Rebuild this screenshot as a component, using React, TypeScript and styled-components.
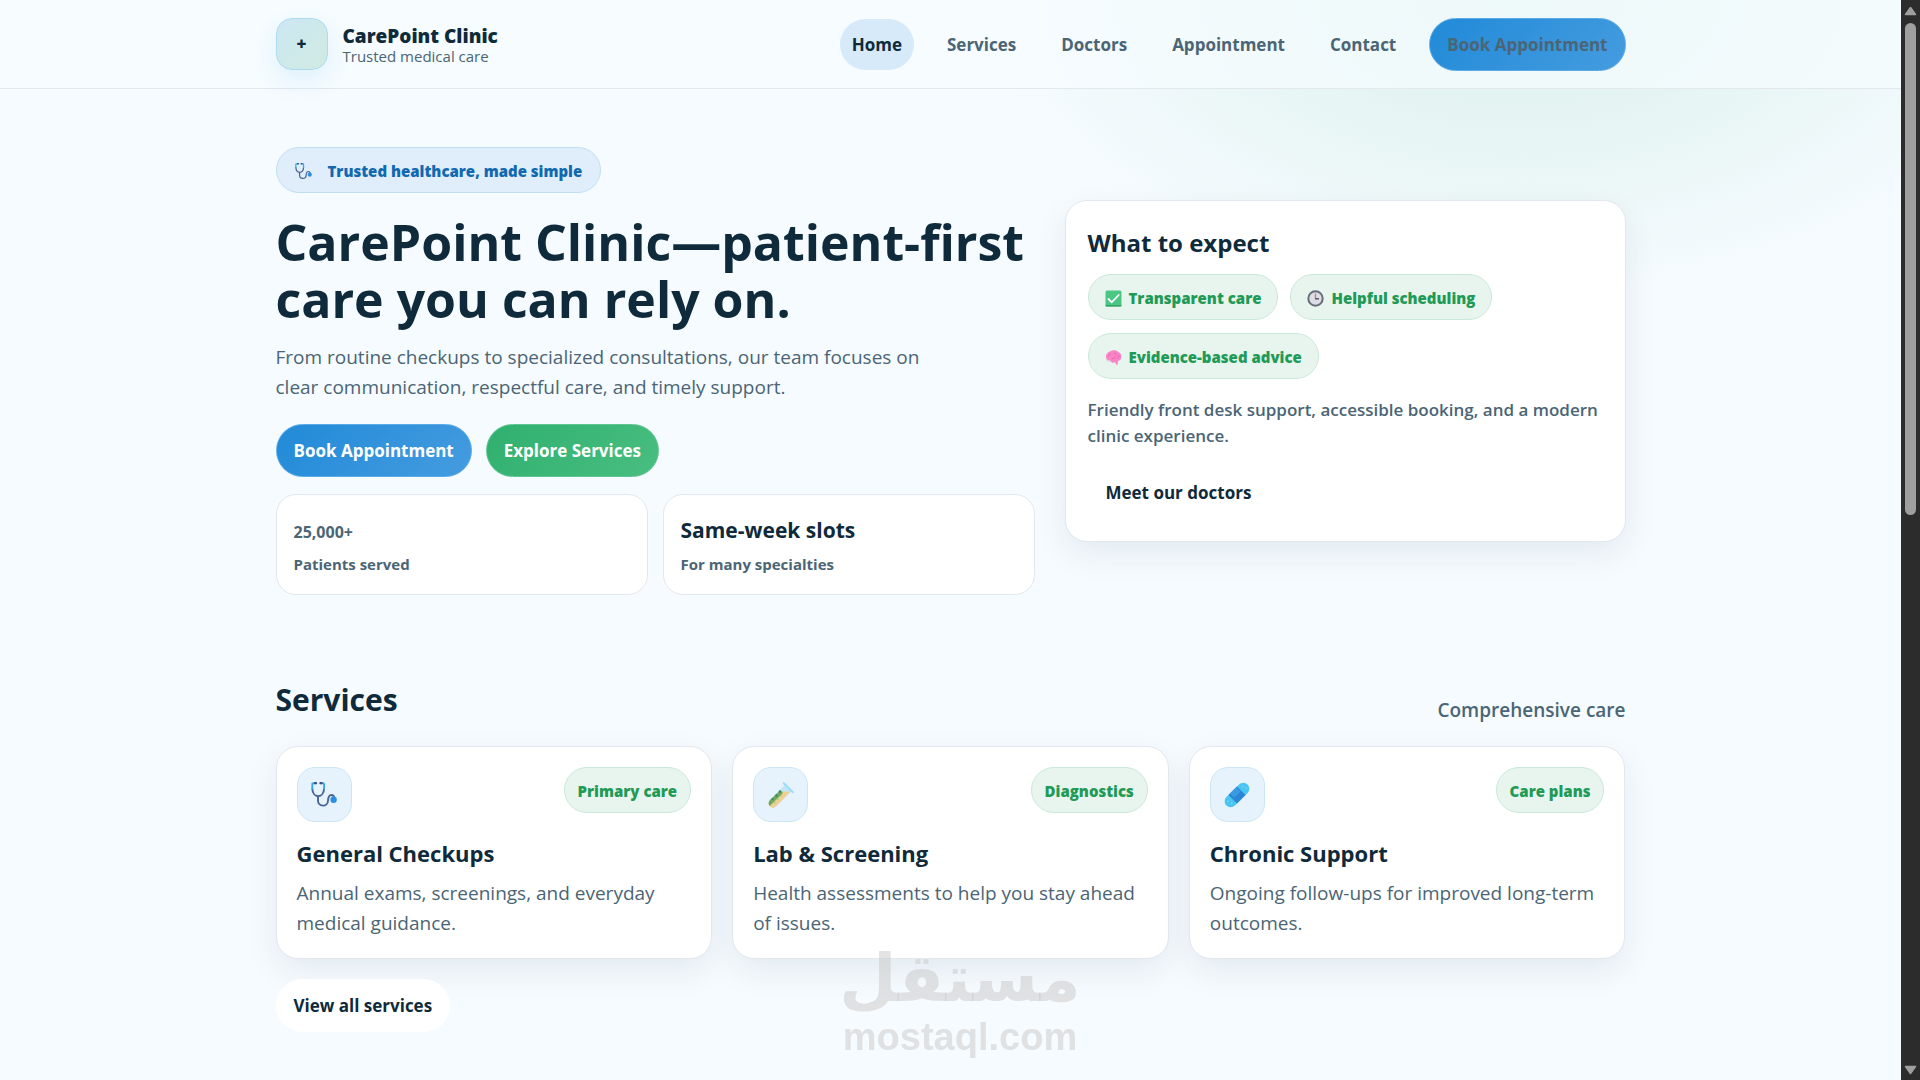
import React from "react";
import styled, { createGlobalStyle, css } from "styled-components";

const ink = "#0f2a3a";
const muted = "#4b6575";
const line = "#e2e8ee";

const GlobalStyle = createGlobalStyle`
  *, *::before, *::after { box-sizing: border-box; }
  body {
    margin: 0;
    background: #f6fbff;
    color: ${ink};
    font-family: "Open Sans", "Noto Sans", sans-serif;
    font-size: 19px;
    line-height: 30px;
  }
  h1, h2, h3, p, ul { margin: 0; padding: 0; }
  a { color: inherit; text-decoration: none; }
  button { font: inherit; cursor: pointer; }
`;

const Shell = styled.div`
  display: grid;
  grid-template-columns: minmax(0, 1fr) 19px;
  height: 100vh;
  overflow: hidden;
`;

const Viewport = styled.div`
  overflow: hidden;
  background:
    radial-gradient(900px 500px at 80% 0%, rgba(46, 170, 115, 0.14), transparent 60%),
    #f6fbff;
`;

const Container = styled.div`
  width: 100%;
  max-width: 1390px;
  margin: 0 auto;
  padding: 0 20px;
`;

const Header = styled.header`
  border-bottom: 1px solid ${line};
  background: rgba(247, 252, 255, 0.7);
`;

const HeaderRow = styled(Container)`
  display: flex;
  align-items: center;
  justify-content: space-between;
  height: 88px;
`;

const Brand = styled.a`
  display: flex;
  align-items: center;
  gap: 15px;
`;

const BrandMark = styled.span`
  display: grid;
  place-items: center;
  width: 52px;
  height: 52px;
  border: 1px solid #aadcf5;
  border-radius: 16px;
  background: linear-gradient(135deg, #cce7f2, #d0ebe2);
  box-shadow: 0 10px 24px rgba(33, 137, 216, 0.1);
  font-size: 17px;
  font-weight: 800;
`;

const BrandText = styled.span`
  display: flex;
  flex-direction: column;
  padding-top: 2px;
`;

const BrandName = styled.span`
  font-size: 19px;
  line-height: 22px;
  font-weight: 800;
`;

const BrandTag = styled.span`
  font-size: 15px;
  line-height: 18px;
  color: ${muted};
`;

const Nav = styled.nav`
  display: flex;
  align-items: center;
  gap: 21px;
`;

const NavLink = styled.a<{ $active?: boolean }>`
  padding: 0 12px;
  border-radius: 999px;
  font-size: 17px;
  line-height: 51px;
  font-weight: 700;
  color: ${(p) => (p.$active ? ink : muted)};
  background: ${(p) => (p.$active ? "#d7eafa" : "transparent")};
`;

type Tone = "blue" | "green" | "plain";

const tones = {
  blue: css`
    border-color: #5aaae6;
    background: linear-gradient(135deg, #218ad8, #459cdf);
    color: #fff;
  `,
  green: css`
    border-color: #5fc592;
    background: linear-gradient(135deg, #2fb06e, #49be80);
    color: #fff;
  `,
  plain: css`
    border-color: transparent;
    background: #fff;
    color: ${ink};
  `,
};

const Button = styled.button<{ $tone: Tone }>`
  padding: 0 17px;
  border: 1px solid;
  border-radius: 999px;
  font-size: 17px;
  line-height: 51px;
  font-weight: 700;
  ${(p) => tones[p.$tone]}
`;

const NavButton = styled(Button)`
  && { color: ${muted}; }
`;

const Hero = styled(Container)`
  display: grid;
  grid-template-columns: minmax(0, 1.15fr) minmax(0, 0.85fr);
  align-items: center;
  gap: 30px;
  padding-top: 58px;
`;

const HeroCopy = styled.div`
  display: flex;
  flex-direction: column;
  align-items: flex-start;
`;

const Pill = styled.span<{ $blue?: boolean; $tight?: boolean }>`
  display: inline-flex;
  align-items: center;
  gap: ${(p) => (p.$blue ? 16 : 7)}px;
  padding: 2px ${(p) => (p.$tight ? 13 : p.$blue ? 18 : 16)}px 0;
  border: 1px solid ${(p) => (p.$blue ? "#bfe0f2" : "#c9e9da")};
  border-radius: 999px;
  background: ${(p) => (p.$blue ? "#e0eefc" : "#e8f5ef")};
  color: ${(p) => (p.$blue ? "#1169b0" : "#1f9a57")};
  font-size: 15px;
  line-height: 42px;
  font-weight: 800;
  white-space: nowrap;
`;

const Title = styled.h1`
  margin-top: 21px;
  font-size: 50px;
  line-height: 57px;
  font-weight: 700;
`;

const Lead = styled.p`
  max-width: 670px;
  margin-top: 14px;
  color: ${muted};
`;

const Actions = styled.div`
  display: flex;
  gap: 14px;
  margin-top: 22px;
`;

const Stats = styled.div`
  display: grid;
  grid-template-columns: 1fr 1fr;
  gap: 15px;
  width: 100%;
  margin-top: 17px;
`;

const Stat = styled.div`
  display: flex;
  flex-direction: column;
  padding: 19px 17px 16px;
  border: 1px solid ${line};
  border-radius: 20px;
  background: #fff;
`;

const StatValue = styled.span<{ $small?: boolean }>`
  margin-bottom: ${(p) => (p.$small ? 0 : 4)}px;
  font-size: ${(p) => (p.$small ? 16 : 21)}px;
  line-height: ${(p) => (p.$small ? 36 : 32)}px;
  font-weight: 700;
  color: ${(p) => (p.$small ? muted : ink)};
`;

const StatLabel = styled.span`
  font-size: 15px;
  line-height: 28px;
  font-weight: 700;
  color: ${muted};
`;

const Card = styled.article`
  border: 1px solid ${line};
  border-radius: 22px;
  background: #fff;
  box-shadow: 0 12px 32px rgba(15, 42, 58, 0.08);
`;

const ExpectCard = styled(Card)`
  padding: 22px;
`;

const ExpectTitle = styled.h2`
  font-size: 24px;
  line-height: 40px;
  font-weight: 700;
`;

const PillRow = styled.div`
  display: flex;
  flex-wrap: wrap;
  gap: 13px 12px;
  margin-top: 11px;
`;

const ExpectText = styled.p`
  margin: 18px 0 17px;
  font-size: 17px;
  line-height: 26px;
  font-weight: 600;
  color: ${muted};
`;

const Section = styled(Container)`
  padding-top: 80px;
`;

const SectionHead = styled.div`
  display: flex;
  align-items: flex-end;
  justify-content: space-between;
`;

const SectionTitle = styled.h2`
  font-size: 30px;
  line-height: 50px;
  font-weight: 700;
`;

const SectionNote = styled.p`
  font-weight: 600;
  color: ${muted};
`;

const Cards = styled.div`
  display: grid;
  grid-template-columns: repeat(3, minmax(0, 1fr));
  gap: 20px;
  margin: 21px 0 20px;
`;

const ServiceCard = styled(Card)`
  padding: 20px;
`;

const ServiceTop = styled.div`
  display: flex;
  align-items: flex-start;
  justify-content: space-between;
`;

const IconTile = styled.span`
  display: grid;
  place-items: center;
  width: 55px;
  height: 55px;
  border: 1px solid #cbe7f5;
  border-radius: 18px;
  background: #e6f2fc;
`;

const ServiceName = styled.h3`
  margin-top: 14px;
  font-size: 22px;
  line-height: 34px;
  font-weight: 700;
`;

const ServiceText = styled.p`
  margin-top: 8px;
  color: ${muted};
`;

const Watermark = styled.div`
  position: fixed;
  left: 50%;
  bottom: 24px;
  transform: translateX(-50%);
  display: flex;
  flex-direction: column;
  align-items: center;
  color: rgba(200, 200, 200, 0.5);
  font-weight: 700;
  pointer-events: none;
`;

const WatermarkArabic = styled.span`
  font-family: "DejaVu Sans", sans-serif;
  font-size: 66px;
  line-height: 78px;
`;

const WatermarkLatin = styled.span`
  font-family: "Liberation Sans", Arial, sans-serif;
  font-size: 38px;
  line-height: 38px;
`;

const ScrollTrack = styled.aside`
  display: flex;
  flex-direction: column;
  align-items: center;
  padding: 6px 0 5px;
  background: #2c2c2c;
`;

const ScrollThumb = styled.div`
  width: 11px;
  height: 46%;
  margin: 7px 0 auto;
  border-radius: 6px;
  background: #9f9f9f;
`;

const Arrow = ({ down = false }: { down?: boolean }) => (
  <svg width="13" height="10" viewBox="0 0 13 10" aria-hidden="true">
    <path
      d={down ? "M1.5 1.5h10L6.5 8.5z" : "M1.5 8.5h10L6.5 1.5z"}
      fill="#9f9f9f"
      stroke="#9f9f9f"
      strokeWidth="1.5"
      strokeLinejoin="round"
    />
  </svg>
);

const Stethoscope = ({ size }: { size: number }) => (
  <svg width={size} height={size} viewBox="0 0 26 26" fill="none" aria-hidden="true">
    <path
      d="M7 14.4V18.5a5 5 0 0 0 10 .3c.2-3.300 1-5.800 3.400-5.800 2.300 0 2.900 1.600 2.900 3.600"
      stroke="#4a6594"
      strokeWidth="1.900"
      strokeLinecap="round"
    />
    <path d="M1.300 6.500c.2 4.500 2.600 7.700 5.900 7.700s5.700-3.200 5.900-7.700" stroke="#4a6594" strokeWidth="1.900" />
    <path
      d="M4.600 1.200H2.300c-.7 0-1 .4-1 1v4.600M9.900 1.200h2.200c.7 0 1 .4 1 1v4.600"
      stroke="#35a8ea"
      strokeWidth="1.900"
      strokeLinecap="round"
    />
    <path d="M3.900 1.200h1.200M9.400 1.200h1.200" stroke="#3f5478" strokeWidth="2.200" strokeLinecap="round" />
    <circle cx="22.600" cy="17.800" r="3.200" fill="#2b8fe0" />
  </svg>
);

const TestTube = () => (
  <svg width="26" height="26" viewBox="0 0 26 26" aria-hidden="true">
    <path d="M17 2.500 23.500 9 8.200 24.300c-1.800 1.800-4.500 1.800-6.200.1s-1.700-4.500 0-6.300z" fill="#bfe6fb" />
    <path d="M11.500 9.500h11L8.200 24.300c-1.800 1.800-4.500 1.800-6.200.1s-1.700-4.500 0-6.300z" fill="#f0cf93" />
    <path d="M11 9.500 2 18.100c-1.700 1.800-1.800 4.300-.3 6L14.500 11.500V9.500z" fill="#6fa75f" />
    <path d="m15.800 1.200 9 9" stroke="#9adcfb" strokeWidth="2" strokeLinecap="round" />
    <g fill="#2f8f5b">
      <circle cx="12" cy="9.500" r="1.300" />
      <circle cx="8.500" cy="13.500" r="1.200" />
      <circle cx="4.500" cy="17" r="1.100" />
    </g>
    <g fill="#a7cf7d">
      <circle cx="10" cy="17" r="1" />
      <circle cx="6.500" cy="20.500" r="1" />
      <circle cx="13" cy="14" r="0.900" />
    </g>
  </svg>
);

const Bandage = () => (
  <svg width="26" height="26" viewBox="0 0 26 26" aria-hidden="true">
    <g transform="rotate(-45 13 13)">
      <rect x="-2" y="7" width="30" height="12" rx="6" fill="#49c5f2" />
      <rect x="7" y="7" width="12" height="12" fill="#2c86d6" />
      <rect x="9" y="7" width="9" height="6" fill="#3b9be2" />
      <g fill="#86dcf8">
        <circle cx="2" cy="11" r="0.700" />
        <circle cx="3.500" cy="15" r="0.700" />
        <circle cx="23" cy="11" r="0.700" />
        <circle cx="24.500" cy="14.500" r="0.700" />
      </g>
    </g>
  </svg>
);

const CheckBox = () => (
  <svg width="17" height="17" viewBox="0 0 17 17" aria-hidden="true">
    <rect x="0.500" y="0.500" width="16" height="16" rx="1.500" fill="#4cc684" />
    <path d="M.5 15h16v.5a1 1 0 0 1-1 1h-14a1 1 0 0 1-1-1z" fill="#2fa567" />
    <path d="m3.500 9 3.200 3.300 7-7.300" fill="none" stroke="#fff" strokeWidth="1.800" strokeLinecap="round" />
  </svg>
);

const Clock = () => (
  <svg width="17" height="17" viewBox="0 0 17 17" fill="none" aria-hidden="true">
    <circle cx="8.500" cy="8.500" r="7.200" fill="#dcdde6" stroke="#686d77" strokeWidth="2" />
    <path d="M8.500 3.500v5.300" stroke="#d9706a" strokeWidth="1.300" />
    <path d="M8 8.800h4" stroke="#555b66" strokeWidth="1.500" />
  </svg>
);

const Brain = () => (
  <svg width="17" height="17" viewBox="0 0 17 17" fill="none" aria-hidden="true">
    <path
      d="M1 8.500C.6 5.500 2.500 3 5 2.400 7.500.9 11 1 13 2.800c2.400.9 3.700 3.400 3.300 5.800-.2 2-1.600 3.300-3.300 3.400l-.4 3.800-1.400-.1-1-2.500c-2 .9-4 .4-4.800-1.300C3.200 12 1.300 11 1 8.500z"
      fill="#f985c6"
    />
    <path
      d="M3 7.500c1.200-.8 1.500-2 2.500-2.600M7 9.500c1.600.4 3-.5 3.200-1.900M9 4.200c1.200 0 2 .6 2.400 1.500M13.800 6.500c.2 1.200-.3 2.200-1.300 2.700"
      stroke="#e264a9"
      strokeWidth="0.900"
      strokeLinecap="round"
    />
    <path d="M1.600 11c1 1 2.500 1.400 4 1" stroke="#e9d4e4" strokeWidth="1.200" strokeLinecap="round" />
  </svg>
);

const links = ["Services", "Doctors", "Appointment", "Contact"];

const services = [
  {
    icon: <Stethoscope size={26} />,
    tag: "Primary care",
    name: "General Checkups",
    text: "Annual exams, screenings, and everyday medical guidance.",
  },
  {
    icon: <TestTube />,
    tag: "Diagnostics",
    name: "Lab & Screening",
    text: "Health assessments to help you stay ahead of issues.",
  },
  {
    icon: <Bandage />,
    tag: "Care plans",
    name: "Chronic Support",
    text: "Ongoing follow-ups for improved long-term outcomes.",
  },
];

export default function App() {
  return (
    <>
      <GlobalStyle />
      <Shell>
        <Viewport>
          <Header>
            <HeaderRow>
              <Brand href="#home">
                <BrandMark>+</BrandMark>
                <BrandText>
                  <BrandName>CarePoint Clinic</BrandName>
                  <BrandTag>Trusted medical care</BrandTag>
                </BrandText>
              </Brand>
              <Nav aria-label="Main">
                <NavLink href="#home" $active aria-current="page">
                  Home
                </NavLink>
                {links.map((label) => (
                  <NavLink key={label} href={`#${label.toLowerCase()}`}>
                    {label}
                  </NavLink>
                ))}
                <NavButton as="a" href="#appointment" $tone="blue">
                  Book Appointment
                </NavButton>
              </Nav>
            </HeaderRow>
          </Header>

          <main>
            <Hero>
              <HeroCopy>
                <Pill $blue>
                  <Stethoscope size={17} />
                  Trusted healthcare, made simple
                </Pill>
                <Title>CarePoint Clinic—patient-first care you can rely on.</Title>
                <Lead>
                  From routine checkups to specialized consultations, our team focuses on clear
                  communication, respectful care, and timely support.
                </Lead>
                <Actions>
                  <Button $tone="blue">Book Appointment</Button>
                  <Button $tone="green">Explore Services</Button>
                </Actions>
                <Stats>
                  <Stat>
                    <StatValue $small>25,000+</StatValue>
                    <StatLabel>Patients served</StatLabel>
                  </Stat>
                  <Stat>
                    <StatValue>Same-week slots</StatValue>
                    <StatLabel>For many specialties</StatLabel>
                  </Stat>
                </Stats>
              </HeroCopy>

              <ExpectCard>
                <ExpectTitle>What to expect</ExpectTitle>
                <PillRow>
                  <Pill>
                    <CheckBox />
                    Transparent care
                  </Pill>
                  <Pill>
                    <Clock />
                    Helpful scheduling
                  </Pill>
                  <Pill>
                    <Brain />
                    Evidence-based advice
                  </Pill>
                </PillRow>
                <ExpectText>
                  Friendly front desk support, accessible booking, and a modern clinic experience.
                </ExpectText>
                <Button $tone="plain">Meet our doctors</Button>
              </ExpectCard>
            </Hero>

            <Section as="section">
              <SectionHead>
                <SectionTitle>Services</SectionTitle>
                <SectionNote>Comprehensive care</SectionNote>
              </SectionHead>
              <Cards>
                {services.map((s) => (
                  <ServiceCard key={s.name}>
                    <ServiceTop>
                      <IconTile>{s.icon}</IconTile>
                      <Pill $tight>{s.tag}</Pill>
                    </ServiceTop>
                    <ServiceName>{s.name}</ServiceName>
                    <ServiceText>{s.text}</ServiceText>
                  </ServiceCard>
                ))}
              </Cards>
              <Button $tone="plain">View all services</Button>
            </Section>
          </main>

          <Watermark>
            <WatermarkArabic lang="ar">مستقل</WatermarkArabic>
            <WatermarkLatin>mostaql.com</WatermarkLatin>
          </Watermark>
        </Viewport>
        <ScrollTrack aria-hidden="true">
          <Arrow />
          <ScrollThumb />
          <Arrow down />
        </ScrollTrack>
      </Shell>
    </>
  );
}
